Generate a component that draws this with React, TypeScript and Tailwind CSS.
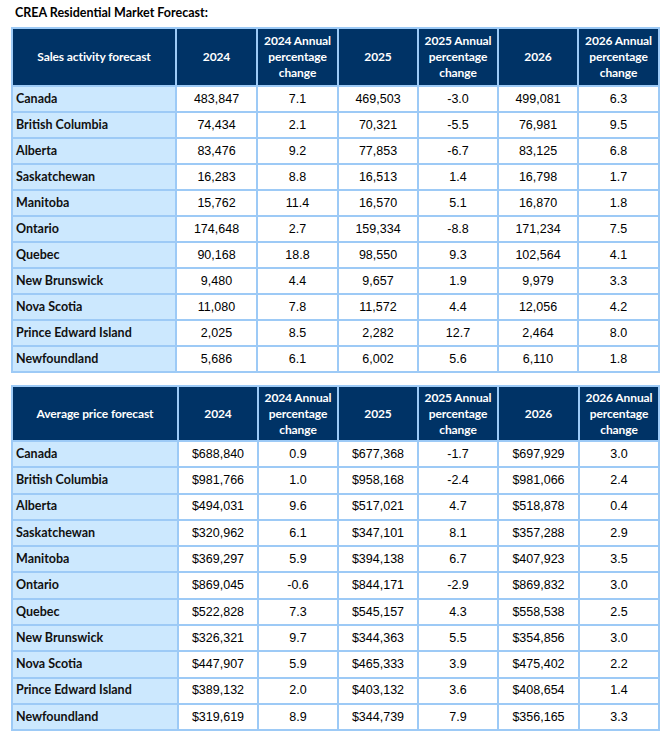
import React from "react";

type Row = [string, string, string, string, string, string, string];

const sales: Row[] = [
  ["Canada", "483,847", "7.1", "469,503", "-3.0", "499,081", "6.3"],
  ["British Columbia", "74,434", "2.1", "70,321", "-5.5", "76,981", "9.5"],
  ["Alberta", "83,476", "9.2", "77,853", "-6.7", "83,125", "6.8"],
  ["Saskatchewan", "16,283", "8.8", "16,513", "1.4", "16,798", "1.7"],
  ["Manitoba", "15,762", "11.4", "16,570", "5.1", "16,870", "1.8"],
  ["Ontario", "174,648", "2.7", "159,334", "-8.8", "171,234", "7.5"],
  ["Quebec", "90,168", "18.8", "98,550", "9.3", "102,564", "4.1"],
  ["New Brunswick", "9,480", "4.4", "9,657", "1.9", "9,979", "3.3"],
  ["Nova Scotia", "11,080", "7.8", "11,572", "4.4", "12,056", "4.2"],
  ["Prince Edward Island", "2,025", "8.5", "2,282", "12.7", "2,464", "8.0"],
  ["Newfoundland", "5,686", "6.1", "6,002", "5.6", "6,110", "1.8"],
];

const prices: Row[] = [
  ["Canada", "$688,840", "0.9", "$677,368", "-1.7", "$697,929", "3.0"],
  ["British Columbia", "$981,766", "1.0", "$958,168", "-2.4", "$981,066", "2.4"],
  ["Alberta", "$494,031", "9.6", "$517,021", "4.7", "$518,878", "0.4"],
  ["Saskatchewan", "$320,962", "6.1", "$347,101", "8.1", "$357,288", "2.9"],
  ["Manitoba", "$369,297", "5.9", "$394,138", "6.7", "$407,923", "3.5"],
  ["Ontario", "$869,045", "-0.6", "$844,171", "-2.9", "$869,832", "3.0"],
  ["Quebec", "$522,828", "7.3", "$545,157", "4.3", "$558,538", "2.5"],
  ["New Brunswick", "$326,321", "9.7", "$344,363", "5.5", "$354,856", "3.0"],
  ["Nova Scotia", "$447,907", "5.9", "$465,333", "3.9", "$475,402", "2.2"],
  ["Prince Edward Island", "$389,132", "2.0", "$403,132", "3.6", "$408,654", "1.4"],
  ["Newfoundland", "$319,619", "8.9", "$344,739", "7.9", "$356,165", "3.3"],
];

const cal = "font-['Lato','Open_Sans',sans-serif]";
const arial = "font-['Liberation_Sans',Arial,sans-serif]";

function ForecastTable({
  title,
  rows,
  widths,
  headH,
  rowH,
}: {
  title: string;
  rows: Row[];
  widths: number[];
  headH: string;
  rowH: string;
}) {
  const heads = [
    title,
    "2024",
    "2024 Annual percentage change",
    "2025",
    "2025 Annual percentage change",
    "2026",
    "2026 Annual percentage change",
  ];
  return (
    <table className="w-[647px] table-fixed border-collapse border-2 border-[#9dcaf6]">
      <colgroup>
        {widths.map((w, i) => (
          <col key={i} style={{ width: w }} />
        ))}
      </colgroup>
      <thead>
        <tr className={headH}>
          {heads.map((h, i) => (
            <th
              key={i}
              className={`border-2 border-[#9dcaf6] bg-[#003366] p-0 text-center align-middle text-[12px] font-bold leading-[16px] tracking-[-0.1px] text-white ${cal}`}
            >
              {h}
            </th>
          ))}
        </tr>
      </thead>
      <tbody>
        {rows.map((r) => (
          <tr key={r[0]} className={rowH}>
            <td
              className={`border-2 border-[#9dcaf6] bg-[#cce8fe] py-0 pl-[3px] text-left align-middle text-[12.5px] font-bold text-[#111] ${cal}`}
            >
              {r[0]}
            </td>
            {r.slice(1).map((v, i) => (
              <td
                key={i}
                className={`border-2 border-[#9dcaf6] bg-white p-0 text-center align-middle text-[12.5px] text-black ${arial}`}
              >
                {v}
              </td>
            ))}
          </tr>
        ))}
      </tbody>
    </table>
  );
}

export default function App() {
  return (
    <div className="min-h-[741px] w-[668px] bg-white pl-[11px]">
      <div className={`pl-[4px] pt-[5px] text-[12.5px] font-bold leading-[16px] text-black ${cal}`}>
        CREA Residential Market Forecast:
      </div>
      <div className="mt-[6px]">
        <ForecastTable
          title="Sales activity forecast"
          rows={sales}
          widths={[164, 81, 81, 80, 80, 80, 81]}
          headH="h-[58px]"
          rowH="h-[26px]"
        />
      </div>
      <div className="mt-[12px]">
        <ForecastTable
          title="Average price forecast"
          rows={prices}
          widths={[166, 80, 80, 80, 80, 81, 80]}
          headH="h-[55px]"
          rowH="h-[26.3px]"
        />
      </div>
    </div>
  );
}
